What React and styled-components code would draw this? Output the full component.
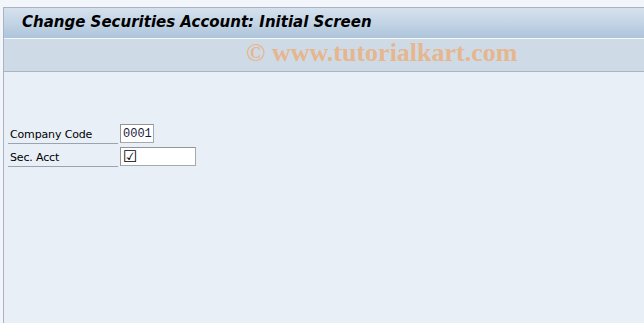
import React from 'react';
import styled, { createGlobalStyle } from 'styled-components';

const GlobalStyle = createGlobalStyle`
  html, body {
    margin: 0;
    padding: 0;
    background: #f2f5f9;
  }
  #root {
    width: 644px;
    height: 323px;
    overflow: hidden;
  }
`;

const App = () => {
  return (
    <>
      <GlobalStyle />
      <StScreen>
        <StTopStrip />
        <StFrame>
          <StTitleBar>
            <StTitle>Change Securities Account: Initial Screen</StTitle>
          </StTitleBar>
          <StToolbar>
            <StWatermark>© www.tutorialkart.com</StWatermark>
          </StToolbar>
          <StBody>
            <StForm>
              <StRow>
                <StLabel>Company Code</StLabel>
                <StInput width={34}>
                  <StValue>0001</StValue>
                </StInput>
              </StRow>
              <StRow>
                <StLabel>Sec. Acct</StLabel>
                <StInput width={76}>
                  <StCheck>☑</StCheck>
                </StInput>
              </StRow>
            </StForm>
          </StBody>
        </StFrame>
      </StScreen>
    </>
  );
};

export default App;

const StScreen = styled.div`
  width: 644px;
  height: 323px;
  display: flex;
  flex-direction: column;
  background: #f2f5f9;
`;

const StTopStrip = styled.div`
  height: 7px;
  flex: none;
`;

const StFrame = styled.div`
  flex: 1;
  display: flex;
  flex-direction: column;
  margin-left: 3px;
  border-left: 1px solid #a9b3c4;
  border-top: 1px solid #a9b3c4;
`;

const StTitleBar = styled.div`
  height: 30px;
  display: flex;
  align-items: center;
  padding-left: 18px;
  background: linear-gradient(to bottom, #d5e1ed 0%, #c3d4e5 50%, #adc4da 100%);
  border-bottom: 1px solid #f4f7fa;
`;

const StTitle = styled.h1`
  margin: 0;
  margin-top: -3px;
  font-family: 'DejaVu Sans', Verdana, sans-serif;
  font-size: 15px;
  font-weight: 700;
  font-style: italic;
  color: #000;
  white-space: nowrap;
`;

const StToolbar = styled.div`
  height: 32px;
  display: flex;
  align-items: center;
  padding-left: 242px;
  background: #cedbe7;
  border-bottom: 1px solid #a9b3c4;
`;

const StWatermark = styled.span`
  margin-top: -5px;
  font-family: 'Liberation Serif', 'Times New Roman', serif;
  font-size: 26px;
  font-weight: 700;
  color: #e6b68e;
  white-space: nowrap;
`;

const StBody = styled.div`
  flex: 1;
  background: #e9eff7;
  padding: 51px 0 0 4px;
`;

const StForm = styled.div`
  display: flex;
  flex-direction: column;
  gap: 1px;
`;

const StRow = styled.div`
  display: flex;
  align-items: flex-start;
  height: 22px;
`;

const StLabel = styled.div`
  width: 110px;
  height: 21px;
  box-sizing: border-box;
  padding: 3px 0 0 2px;
  display: flex;
  align-items: center;
  border-bottom: 1px solid #9aa3ae;
  font-family: 'DejaVu Sans', Verdana, sans-serif;
  font-size: 11px;
  letter-spacing: -0.15px;
  color: #000;
  margin-right: 2px;
`;

const StInput = styled.div`
  width: ${(p) => p.width}px;
  height: 19px;
  margin-top: 1px;
  box-sizing: border-box;
  display: flex;
  align-items: center;
  padding-left: 2px;
  background: #fff;
  border: 1px solid #a4a9ae;
  border-top-color: #8f959b;
  border-left-color: #8f959b;
`;

const StValue = styled.span`
  font-family: 'Liberation Mono', 'Courier New', monospace;
  font-size: 12px;
  color: #1a1a40;
`;

const StCheck = styled.span`
  font-family: 'DejaVu Sans', sans-serif;
  font-size: 16px;
  line-height: 1;
  color: #000;
`;
